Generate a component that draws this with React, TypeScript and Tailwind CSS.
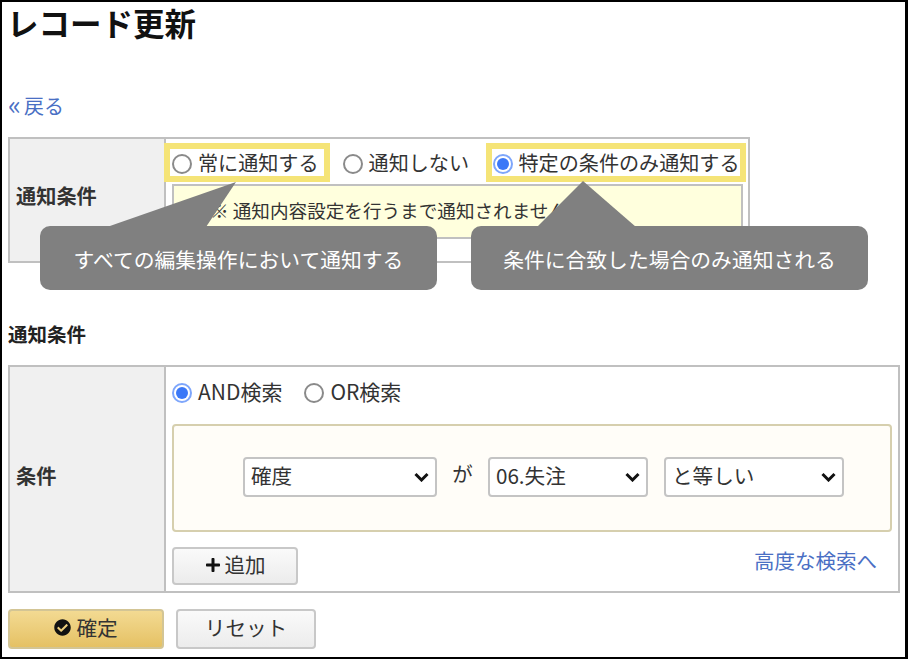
import { FaCheckCircle, FaPlus } from "react-icons/fa";

const font = { fontFamily: '"Noto Sans CJK JP", "Liberation Sans", sans-serif' };

function Radio({ label, checked, className }: { label: string; checked?: boolean; className?: string }) {
  return (
    <label className={`flex items-center gap-[6px] ${className ?? ""}`}>
      {checked ? (
        <span className="flex items-center justify-center w-[20px] h-[20px] rounded-full border-2 border-[#7ea6fb] bg-white">
          <span className="w-[12px] h-[12px] rounded-full bg-[#3b78f7]" />
        </span>
      ) : (
        <span className="w-[20px] h-[20px] rounded-full border-2 border-[#8a8a8a] bg-white" />
      )}
      <span className="whitespace-nowrap pb-[2px]">{label}</span>
    </label>
  );
}

function Select({ value, className }: { value: string; className: string }) {
  return (
    <div className={`relative h-[40px] ${className}`}>
      <select
        defaultValue={value}
        className="appearance-none w-full h-full pl-[6px] pr-[7px] pb-[4px] bg-white border-2 border-[#c4c4c4] rounded-[4px] text-[20.6px] text-[#333]"
      >
        <option>{value}</option>
      </select>
      {/* 矢印 */}
      <svg
        viewBox="0 0 15 10"
        className="absolute right-[8px] top-[15px] w-[15px] h-[10px] pointer-events-none"
      >
        <path d="M1.5 2 L7.5 8 L13.5 2" fill="none" stroke="#111" strokeWidth="3" />
      </svg>
    </div>
  );
}

export default function App() {
  return (
    <div
      style={font}
      className="relative w-[908px] h-[659px] border-2 border-r-[3px] border-black bg-white px-[6px] text-[#333] overflow-hidden"
    >
      {/* タイトル */}
      <h1 className="h-[46px] ml-[-1px] text-[31.5px] leading-[40px] font-bold text-[#111]">レコード更新</h1>

      <div className="mt-[44px] h-[45px] text-[20px] leading-[28px] text-[#4a6fc4]">
        <a className="flex">
          <span className="w-[16px] text-[27px] leading-[24px]">«</span>戻る
        </a>
      </div>

      {/* 通知条件 1 */}
      <div className="flex w-[742px] h-[126px] border-2 border-[#c0c0c0]">
        <div className="flex items-center w-[156px] shrink-0 pl-[6px] pb-[7px] bg-[#f0f0f0] border-r-2 border-[#c0c0c0] text-[20.2px] font-bold">
          通知条件
        </div>
        <div className="flex-1 px-[6px] pt-[11px] text-[20.1px]">
          <div className="flex h-[28px] items-center">
            <Radio label="常に通知する" className="mr-[24px]" />
            <Radio label="通知しない" className="mr-[23.5px]" />
            <Radio label="特定の条件のみ通知する" checked />
          </div>
          <div className="mt-[6px] h-[55px] w-[571px] border-2 border-[#c0c0c0] bg-[#ffffdd] pl-[36px] pt-[10px] text-[18.6px] leading-[28px] whitespace-nowrap overflow-hidden">
            ※ 通知内容設定を行うまで通知されません。
          </div>
        </div>
      </div>

      {/* 通知条件 2 */}
      <h2 className="mt-[57px] h-[45px] text-[19.5px] leading-[28px] font-bold text-[#222]">通知条件</h2>
      <div className="flex w-[892px] h-[228px] border-2 border-[#c0c0c0]">
        <div className="flex items-center w-[156px] shrink-0 pl-[6px] pb-[5px] bg-[#f0f0f0] border-r-2 border-[#c0c0c0] text-[20.2px] font-bold">
          条件
        </div>
        <div className="flex-1 px-[6px] pt-[12px] text-[20.5px]">
          <div className="flex h-[28px] items-center text-[21px]">
            <Radio label="AND検索" checked className="mr-[22px]" />
            <Radio label="OR検索" />
          </div>
          <div className="flex items-center mt-[17px] h-[108px] w-[720px] pl-[69px] pb-[2px] border-2 border-[#d6cfae] rounded-[4px] bg-[#fffdf8]">
            <Select value="確度" className="w-[194px]" />
            <span className="w-[51px] text-center pb-[8px]">が</span>
            <Select value="06.失注" className="w-[160px]" />
            <Select value="と等しい" className="w-[180px] ml-[16px]" />
          </div>
          <div className="flex justify-between mt-[15px] w-[705px]">
            <button className="flex items-center justify-center gap-[4px] w-[126px] h-[38px] pb-[3px] border-2 border-[#c8c8c8] rounded-[4px] bg-linear-to-b from-[#fafafa] to-[#ececec]">
              <FaPlus className="w-[16px] h-[16px] text-[#111]" />
              追加
            </button>
            <a className="mt-[-1px] text-[#4a6fc4] leading-[28px]">高度な検索へ</a>
          </div>
        </div>
      </div>

      {/* ボタン */}
      <div className="flex gap-[12px] mt-[16px] text-[20.6px]">
        <button className="flex items-center justify-center gap-[5px] w-[156px] h-[40px] pb-[3px] border-2 border-[#d3c595] rounded-[4px] bg-linear-to-b from-[#f3da92] to-[#e5c163]">
          <FaCheckCircle className="w-[17px] h-[17px] text-[#111]" />
          確定
        </button>
        <button className="w-[140px] h-[40px] pb-[4px] border-2 border-[#c8c8c8] rounded-[4px] bg-linear-to-b from-[#fafafa] to-[#ececec]">
          リセット
        </button>
      </div>

      {/* 黄色枠 */}
      <div className="absolute left-[162px] top-[141px] w-[166px] h-[39px] border-[6px] border-[#f5e477]" />
      <div className="absolute left-[484px] top-[141px] w-[260px] h-[39px] border-[6px] border-[#f5e477]" />

      {/* 吹き出し */}
      <svg className="absolute left-[100px] top-[170px] w-[560px] h-[60px] pointer-events-none" viewBox="0 0 560 60">
        <polygon points="134,10 5,55 104,55" fill="#808080" />
        <polygon points="481,9 435,55 534,55" fill="#808080" />
      </svg>
      <div className="absolute left-[38px] top-[224px] flex items-center justify-center w-[397px] h-[64px] pt-[3px] rounded-[10px] bg-[#808080] text-[20.8px] text-white">
        すべての編集操作において通知する
      </div>
      <div className="absolute left-[469px] top-[224px] flex items-center justify-center w-[397px] h-[64px] pt-[3px] rounded-[10px] bg-[#808080] text-[20.8px] text-white">
        条件に合致した場合のみ通知される
      </div>
    </div>
  );
}
